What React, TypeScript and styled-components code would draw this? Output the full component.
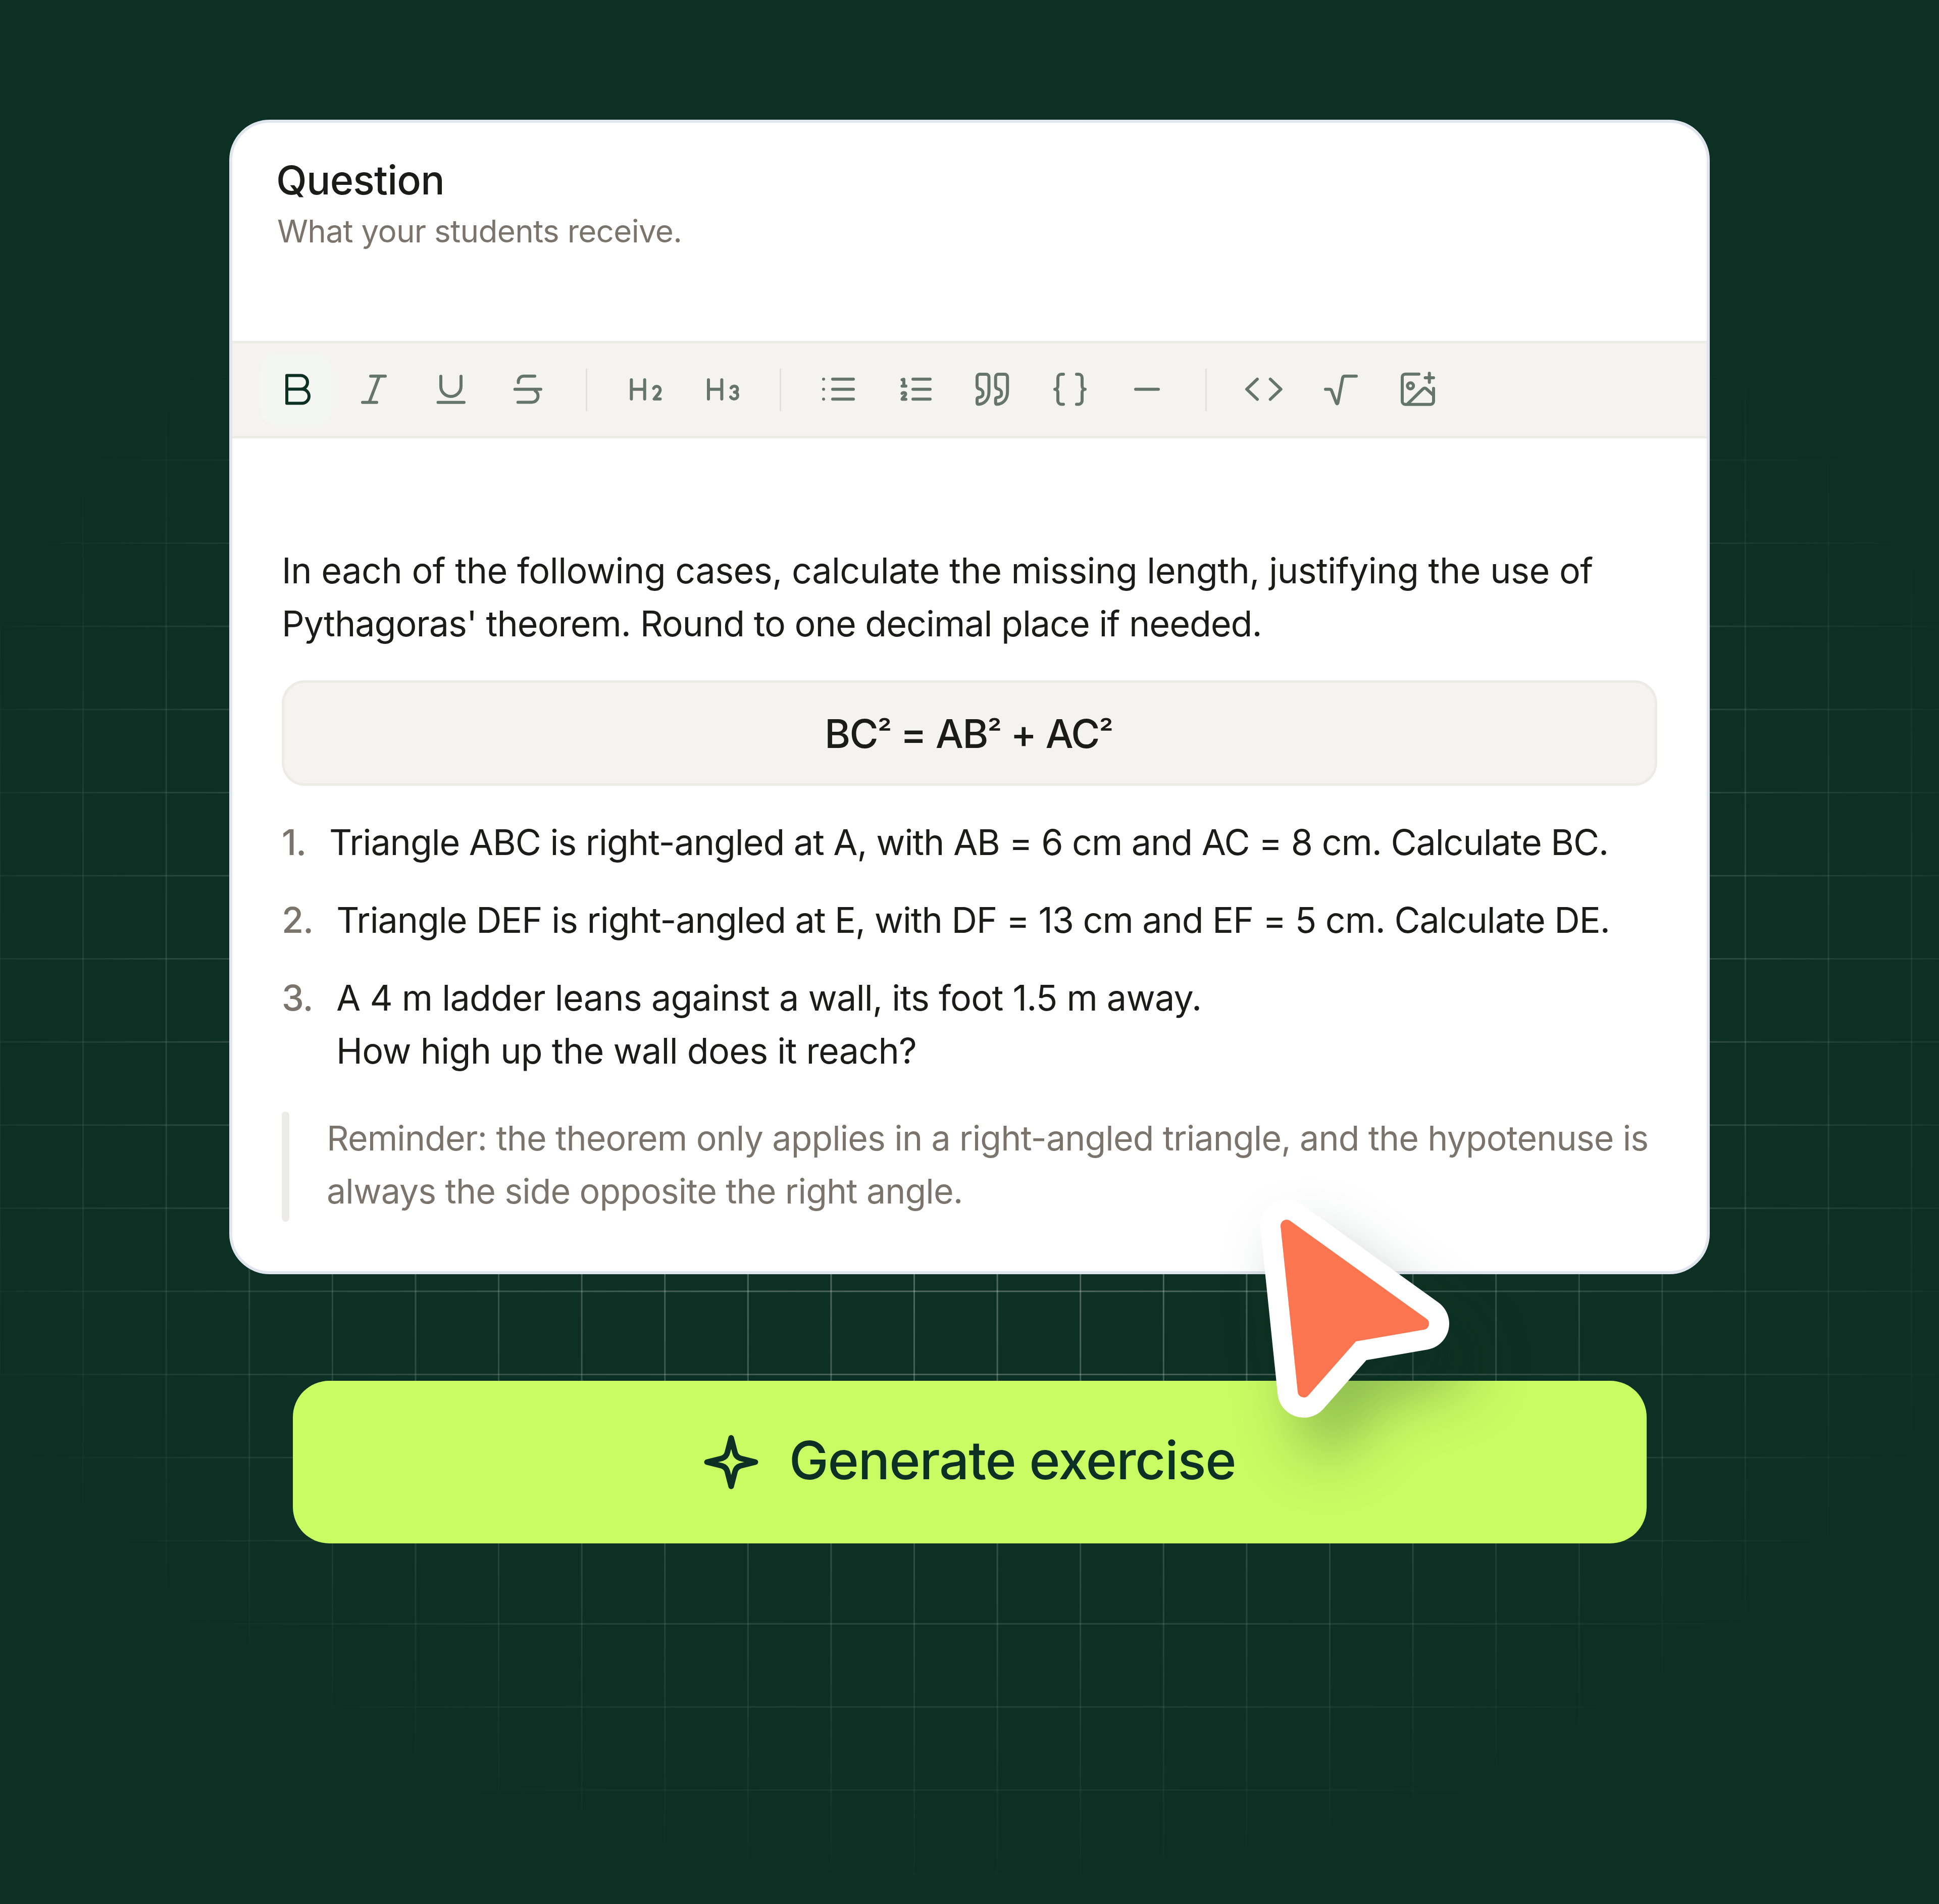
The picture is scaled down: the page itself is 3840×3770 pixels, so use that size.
import React from "react";
import styled, { createGlobalStyle } from "styled-components";

const Global = createGlobalStyle`
  html, body { margin: 0; padding: 0; background: #0d3024; }
  * { box-sizing: border-box; }
`;

const INK = "#1b1b19";
const MUTED = "#7a746d";
const ICON = "#66756c";
const DARK = "#0d3024";
const PAPER = "#f4f3ef";
const RULE = "#ecebe6";

const Page = styled.div`
  position: relative;
  width: 3840px;
  height: 3770px;
  overflow: hidden;
  background: ${DARK};
  display: flex;
  flex-direction: column;
  align-items: center;
  padding-top: 237px;
  font-family: Inter, "Liberation Sans", sans-serif;

  &::before {
    content: "";
    position: absolute;
    inset: 0;
    background-image:
      linear-gradient(to right, rgba(255, 255, 255, 0.3) 3px, transparent 3px),
      linear-gradient(to bottom, rgba(255, 255, 255, 0.3) 3px, transparent 3px);
    background-size: 164.6px 164.6px;
    background-position: -1.5px 86.5px;
    mask-image: radial-gradient(ellipse 2200px 1780px at 1920px 1980px, #000 0%, #000 25%, transparent 100%);
  }
`;

const Card = styled.section`
  position: relative;
  width: 2932px;
  height: 2286px;
  background: #fff;
  border: 6px solid #e1e5ee;
  border-radius: 80px;
  overflow: hidden;
`;

const Header = styled.header`
  height: 432px;
  padding: 63px 0 0 89px;
`;

const Title = styled.h2`
  margin: 0 0 0 -2px;
  font-size: 79px;
  line-height: 100px;
  font-weight: 500;
  letter-spacing: -0.01em;
  color: ${INK};
`;

const Subtitle = styled.p`
  margin: 8px 0 0;
  font-size: 62px;
  line-height: 88px;
  font-weight: 400;
  letter-spacing: -0.012em;
  color: ${MUTED};
`;

const Toolbar = styled.div`
  height: 193px;
  display: flex;
  align-items: center;
  gap: 12px;
  padding-left: 56px;
  background: ${PAPER};
  border-top: 5px solid ${RULE};
  border-bottom: 5px solid ${RULE};
`;

const ToolButton = styled.div<{ $active?: boolean }>`
  width: 141px;
  height: 141px;
  flex: none;
  border-radius: 30px;
  background: ${(p) => (p.$active ? "#f4f6f4" : "transparent")};
  color: ${(p) => (p.$active ? DARK : ICON)};

  svg {
    display: block;
    width: 141px;
    height: 141px;
    fill: none;
    stroke: currentColor;
    stroke-width: 6;
    stroke-linecap: round;
    stroke-linejoin: round;
  }
`;

const ToolDivider = styled.div`
  width: 3px;
  height: 84px;
  flex: none;
  margin: 0 31.5px;
  background: #e2e2dd;
`;

const Body = styled.div`
  padding: 209px 98px 0;
  font-size: 70px;
  line-height: 105px;
  color: ${INK};
  white-space: nowrap;
`;

const Paragraph = styled.p`
  margin: 0;
`;

const TextLine = styled.span<{ $track: string }>`
  display: block;
  letter-spacing: ${(p) => p.$track};
`;

const MathBlock = styled.div`
  height: 209px;
  margin-top: 60px;
  display: flex;
  align-items: center;
  justify-content: center;
  background: ${PAPER};
  border: 5px solid ${RULE};
  border-radius: 46px;
  font-size: 78px;
  font-weight: 450;
  letter-spacing: -0.022em;
  white-space: pre;
`;

const MathText = styled.span`
  margin-left: -4px;
  padding-top: 2px;
`;

const Power = styled.span`
  font-size: 0.8em;
  line-height: 0;
  vertical-align: 0.12em;
`;

const Steps = styled.ol`
  list-style: none;
  margin: 59px 0 0;
  padding: 0;
  display: flex;
  flex-direction: column;
  gap: 49px;
`;

const Step = styled.li<{ $track: string }>`
  display: flex;
  gap: 46px;
  letter-spacing: ${(p) => p.$track};
`;

const StepNumber = styled.span`
  color: ${MUTED};
  font-weight: 500;
`;

const Note = styled.blockquote`
  margin: 68px 0 0;
  display: flex;
  gap: 74px;
  font-size: 68px;
  letter-spacing: -0.013em;
  color: ${MUTED};
`;

const NoteBar = styled.div`
  width: 15px;
  height: 218px;
  flex: none;
  border-radius: 8px;
  background: ${RULE};
`;

const CallToAction = styled.button`
  position: relative;
  width: 2681px;
  height: 322px;
  margin-top: 211px;
  padding: 0;
  border: 0;
  border-radius: 72px;
  background: #c9fb63;
  color: ${DARK};
  display: flex;
  align-items: center;
  justify-content: center;
  gap: 60px;
  font-family: inherit;
  font-size: 104.5px;
  font-weight: 500;
  letter-spacing: -0.012em;

  svg {
    width: 110px;
    height: 110px;
    fill: none;
    stroke: currentColor;
    stroke-width: 11;
    stroke-linejoin: round;
  }
`;

const ActionLabel = styled.span`
  margin-bottom: 9px;
`;

const Pointer = styled.svg`
  position: absolute;
  left: 2440px;
  top: 2370px;
  width: 500px;
  height: 500px;
  overflow: visible;
`;

const PointerHalo = styled.path`
  fill: #fff;
  stroke: #fff;
  stroke-width: 104;
  stroke-linejoin: round;
  filter: drop-shadow(44px 74px 58px rgba(13, 48, 36, 0.3));
`;

const PointerFill = styled.path`
  fill: #fb7550;
  stroke: #fb7550;
  stroke-width: 24;
  stroke-linejoin: round;
`;

const POINTER = "M2548 2427 L2818 2621 L2679 2645 L2582 2755 Z";

const tools: (React.ReactNode | null)[] = [
  <path d="M52 42.5H79.5a13.5 13.5 0 0 1 0 27H52zM52 69.5H82a14 14 0 0 1 0 28H52z" />,
  <path d="M65 43.7H94M49 95.7H77M81.8 44.7L62.6 94.7" />,
  <path d="M51 44V64a20 20 0 0 0 40 0V44M45.5 95.7H97" />,
  <path d="M84 43.7H62a10.5 10.5 0 0 0-10.5 10.5V56.5M44.7 69.7H96M85 73a12 12 0 0 1 5.5 10.5a12 12 0 0 1-12 12H50.7" />,
  null,
  <path d="M44.4 51V89M70.7 51V89M44.4 69.7H70.7M88.5 68q2-4 6-4c4 0 7 3 7 7c0 5-5 9-12 18h12" />,
  <path d="M44 51V89M70.4 51V89M44 69.7H70.4M89 67q2.5-3.5 6-3.5c4 0 6.5 2.5 6.5 6c0 3.5-2.5 6-6 6c4 0 6.5 3 6.5 6.5c0 4-3 7-7 7c-3 0-5.5-1.5-7-4" />,
  null,
  <path d="M59 49.7H100M59 69.7H100M59 89.3H100M41 49.7h.01M41 69.7h.01M41 89.3h.01" />,
  <path d="M65 49.7H99M65 69.7H99M65 89.3H99M43.5 51l3.5-1V63.5M43.5 63.5H51M43.5 78c1-2 7-2.5 7 1.5c0 3-6 6-7 10H51" />,
  <path d="M45 40H57a5.5 5.5 0 0 1 5.5 5.5V75c0 15-9 24-21 24.5a2.5 2.5 0 0 1-2.5-2.5V89a3 3 0 0 1 3-3c5 0 8.5-3 8.5-6V76c0-3-3-6-7-7c-3-.5-4.5-3-4.5-6V45.5A5.5 5.5 0 0 1 45 40zM81.7 40H93.7a5.5 5.5 0 0 1 5.5 5.5V75c0 15-9 24-21 24.5a2.5 2.5 0 0 1-2.5-2.5V89a3 3 0 0 1 3-3c5 0 8.5-3 8.5-6V76c0-3-3-6-7-7c-3-.5-4.5-3-4.5-6V45.5a5.5 5.5 0 0 1 5.5-5.5z" />,
  <path d="M57 40h-4a7 7 0 0 0-7 7V63c0 4-3 6.7-6 6.7c3 0 6 2.7 6 6.7V92.5a7 7 0 0 0 7 7h4M83 40h4a7 7 0 0 1 7 7V63c0 4 3 6.7 6 6.7c-3 0-6 2.7-6 6.7V92.5a7 7 0 0 1-7 7h-4" />,
  <path d="M47 69.7H92" />,
  null,
  <path d="M57 49.7L36 69.7L57 89.7M82.7 49.7L103.7 69.7L82.7 89.7" />,
  <path d="M39 69.7H47c2.5 0 4 1.5 4.5 4L60.5 97q1.5 3 3 0L73 47c.5-2 2-3.3 4.5-3.3H100" />,
  <path d="M71 39.7H44a6 6 0 0 0-6 6V93.7a6 6 0 0 0 6 6H94a6 6 0 0 0 6-6V68M49 98.5L79 69q3.5-3 7 0L100 82M91.7 38V56M83.5 47H100M60.3 63a6 6 0 1 1-12 0a6 6 0 1 1 12 0z" />,
];

export default function App() {
  return (
    <Page>
      <Global />
      <Card>
        <Header>
          <Title>Question</Title>
          <Subtitle>What your students receive.</Subtitle>
        </Header>
        <Toolbar>
          {tools.map((icon, i) =>
            icon === null ? (
              <ToolDivider key={i} />
            ) : (
              <ToolButton key={i} $active={i === 0}>
                <svg viewBox="0 0 141 141">{icon}</svg>
              </ToolButton>
            )
          )}
        </Toolbar>
        <Body>
          <Paragraph>
            <TextLine $track="-0.0077em">
              In each of the following cases, calculate the missing length, justifying the use of
            </TextLine>
            <TextLine $track="-0.0146em">
              Pythagoras' theorem. Round to one decimal place if needed.
            </TextLine>
          </Paragraph>
          <MathBlock>
            <MathText>
              BC<Power>²</Power> = AB<Power>²</Power> + AC<Power>²</Power>
            </MathText>
          </MathBlock>
          <Steps>
            <Step $track="-0.0157em">
              <StepNumber>1.</StepNumber>
              <span>Triangle ABC is right-angled at A, with AB = 6 cm and AC = 8 cm. Calculate BC.</span>
            </Step>
            <Step $track="-0.0157em">
              <StepNumber>2.</StepNumber>
              <span>Triangle DEF is right-angled at E, with DF = 13 cm and EF = 5 cm. Calculate DE.</span>
            </Step>
            <Step $track="-0.011em">
              <StepNumber>3.</StepNumber>
              <span>
                A 4 m ladder leans against a wall, its foot 1.5 m away.
                <br />
                How high up the wall does it reach?
              </span>
            </Step>
          </Steps>
          <Note>
            <NoteBar />
            <span>
              Reminder: the theorem only applies in a right-angled triangle, and the hypotenuse is
              <br />
              always the side opposite the right angle.
            </span>
          </Note>
        </Body>
      </Card>
      <CallToAction>
        <svg viewBox="0 0 110 110">
          <path d="M55 7L62.5 36Q64.5 44.5 73 47.5L103 55L73 62.5Q64.5 65.5 62.5 74L55 103L47.5 74Q45.5 65.5 37 62.5L7 55L37 47.5Q45.5 44.5 47.5 36Z" />
        </svg>
        <ActionLabel>Generate exercise</ActionLabel>
      </CallToAction>
      <Pointer viewBox="2440 2370 500 500">
        <PointerHalo d={POINTER} />
        <PointerFill d={POINTER} />
      </Pointer>
    </Page>
  );
}
